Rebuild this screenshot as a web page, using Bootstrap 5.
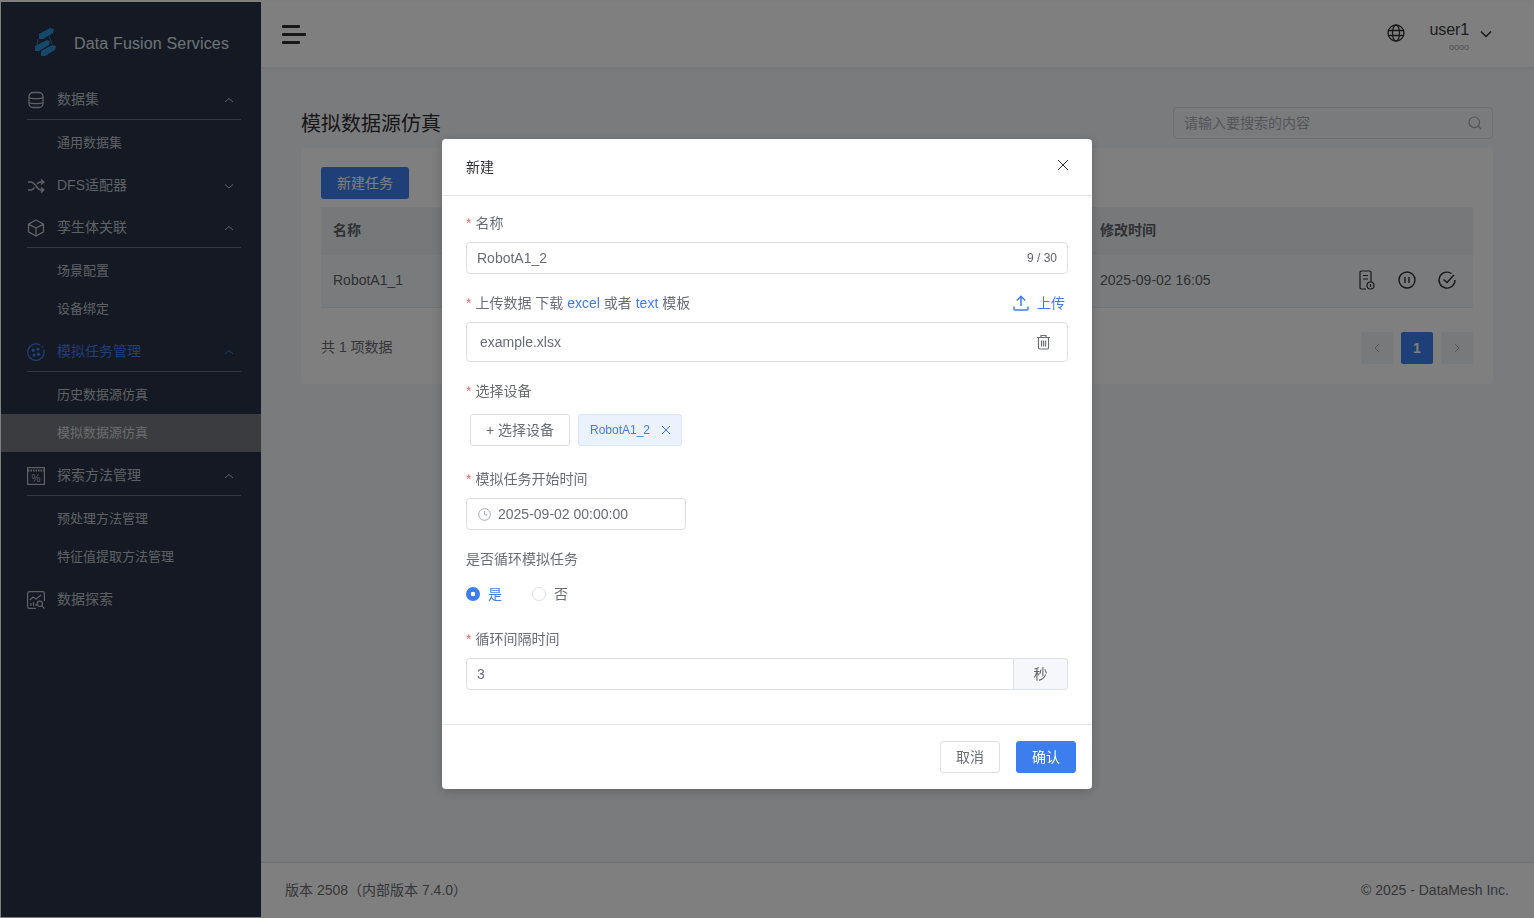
<!DOCTYPE html>
<html lang="zh-CN">

<head>
  <meta charset="UTF-8">
  <meta name="viewport" content="width=device-width, initial-scale=1">
  <title>Data Fusion Services</title>
  <link href="https://cdn.jsdelivr.net/npm/bootstrap@5.3.3/dist/css/bootstrap.min.css" rel="stylesheet">
  <style>
    html, body {
      height: 100%;
      overflow: hidden;
    }

    body {
      background: #fff;
      padding: 2px 0 1px 1px;
      font-family: "Liberation Sans", "Noto Sans CJK SC", sans-serif;
      font-size: 14px;
      color: #6a6d73;
    }

    .app-shell {
      height: 100%;
      background: #f5f6fb;
    }

    /* sidebar */
    .side-panel {
      width: 260px;
      flex: none;
      background: #283246;
      color: #bcc1cb;
    }

    .brand-row {
      height: 76px;
      padding-left: 33px;
      padding-top: 4px;
    }

    .brand-name {
      font-size: 16px;
      letter-spacing: .15px;
      color: #dfe2e7;
      margin-left: 18px;
      padding-top: 4px;
    }

    .group-head {
      height: 42px;
      margin: 0 20px 0 26px;
      padding-top: 2px;
      border-bottom: 1px solid transparent;
    }

    .group-head.is-open {
      border-bottom-color: #667088;
    }

    .group-head svg.menu-icon {
      width: 18px;
      height: 18px;
      flex: none;
      margin-right: 12px;
    }

    .group-head .arrow {
      margin-left: auto;
      margin-right: 7px;
      width: 10px;
      height: 10px;
    }

    .group-head.is-active {
      color: #3d7eee;
    }

    .sub-list {
      padding: 3px 0;
      font-size: 13px;
    }

    .sub-item {
      height: 38px;
      padding-left: 56px;
      line-height: 40px;
    }

    .sub-item.current {
      margin: 1px 0 -1px;
      line-height: 38px;
      background: #74787f;
      color: #d5d8dd;
    }

    /* main */
    .top-bar {
      height: 65px;
      flex: none;
      background: #fff;
      box-shadow: 0 1px 4px rgba(0, 21, 41, .08);
      padding: 0 42px 0 21px;
    }

    .burger {
      width: 24px;
    }

    .burger span {
      display: block;
      height: 3px;
      margin-bottom: 5px;
      background: #303133;
      border-radius: 1px;
    }

    .globe-icon {
      margin-top: -3px;
    }

    .user-block {
      margin: 4px 11px 0 24px;
    }

    .user-name {
      font-size: 16px;
      letter-spacing: -.1px;
      line-height: 18px;
      color: #3a3d42;
    }

    .user-sub {
      font-size: 9px;
      line-height: 10px;
      color: #a0a3a8;
      text-align: right;
      margin-top: 3px;
    }

    .chevron-icon {
      margin-top: -1px;
    }

    .page-area {
      padding: 40px 41px 0 40px;
      min-height: 0;
    }

    .page-title {
      font-size: 20px;
      font-weight: 400;
      color: #303133;
      margin: 0 0 -2px;
      line-height: 34px;
    }

    .search-box {
      width: 320px;
      height: 32px;
      border: 1px solid #dcdfe6;
      border-radius: 4px;
      padding: 0 10px;
      color: #a8abb2;
    }

    .main-card {
      margin-top: 9px;
      height: 236px;
      padding: 19px 20px 0;
      background: #fff;
      border-radius: 4px;
    }

    .btn-new,
    .btn-new:hover {
      background: #3d7eee;
      color: #fff;
      border: 0;
      width: 88px;
      height: 32px;
      padding: 0;
      font-size: 14px;
      border-radius: 3px;
    }

    .task-table {
      margin: 8px 0 0;
      table-layout: fixed;
      font-size: 14px;
    }

    .task-table th {
      height: 46px;
      background: #eff1f5;
      color: #606266;
      vertical-align: middle;
      padding: 2px 12px 0;
      border-bottom: 1px solid #e6e8ee;
    }

    .task-table td {
      height: 54px;
      background: #f5f6fb;
      color: #606266;
      vertical-align: middle;
      padding: 0 12px;
      border-bottom: 1px solid #e6e8ee;
    }

    .row-actions {
      gap: 20px;
      padding-left: 12px;
    }

    .pager-row {
      margin-top: 24px;
    }

    .pager-btn {
      width: 32px;
      height: 32px;
      background: #f0f2f5;
      border-radius: 2px;
      color: #a8abb2;
      font-weight: 700;
    }

    .pager-btn.on {
      padding-top: 2px;
      background: #3d7eee;
      color: #fff;
    }

    .foot-bar {
      height: 55px;
      flex: none;
      background: #fff;
      border-top: 1px solid #dcdfe6;
      padding: 0 25px 0 24px;
    }

    /* dialog */
    .task-modal {
      background: rgba(0, 0, 0, .5);
    }

    .task-modal .modal-dialog {
      max-width: 650px;
      margin: 139px auto 0;
    }

    .task-modal .modal-content {
      border: 0;
      border-radius: 4px;
      height: 650px;
      box-shadow: 0 2px 12px rgba(0, 0, 0, .2);
    }

    .task-modal .modal-header {
      height: 57px;
      padding: 0 24px;
      border-bottom: 1px solid #e4e7ed;
      border-radius: 0;
    }

    .dialog-title {
      font-size: 14px;
      color: #303133;
      margin-top: 1px;
    }

    .close-x {
      background: none;
      border: 0;
      padding: 0;
      margin-top: -4px;
      margin-right: -1px;
      line-height: 0;
    }

    .task-modal .modal-body {
      padding: 16px 24px 0;
      flex: none;
      height: 528px;
    }

    .field-label {
      line-height: 22px;
      color: #6a6d73;
      margin: 0 0 8px;
    }

    .field-label b {
      color: #f56c6c;
      font-weight: 400;
      margin-right: 4px;
    }

    .field-label a {
      color: #3d7eee;
      text-decoration: none;
    }

    .gap-row {
      margin-bottom: 18px;
    }

    .text-input {
      height: 32px;
      border: 1px solid #dcdfe6;
      border-radius: 4px;
      padding: 0 10px;
      font-size: 14px;
      color: #6a6d73;
      box-shadow: none;
    }

    .text-input input {
      border: 0;
      outline: 0;
      color: #6a6d73;
      padding: 0;
      min-width: 0;
      background: transparent;
    }

    .count-text {
      font-size: 12px;
      color: #606266;
    }

    .upload-link {
      color: #3d7eee;
      gap: 8px;
      margin-right: 3px;
    }

    .file-box {
      height: 40px;
      padding: 0 16px 0 13px;
    }

    .pick-row {
      padding-left: 4px;
      margin-top: 12px;
      margin-bottom: 22px;
      gap: 8px;
    }

    .pick-btn {
      width: 100px;
      height: 32px;
      padding: 0;
      font-size: 14px;
      color: #6a6d73;
      background: #fff;
      border: 1px solid #dcdfe6;
      border-radius: 3px;
    }

    .device-tag {
      width: 104px;
      height: 32px;
      padding: 0 10px 0 11px;
      font-size: 12px;
      color: #3d7eee;
      background: #ebf2fd;
      border: 1px solid #d8e5fb;
      border-radius: 3px;
    }

    .time-input {
      width: 220px;
      padding-left: 11px;
      gap: 7px;
    }

    .radio-row {
      height: 16px;
      margin: 16px 0 26px;
      gap: 30px;
    }

    .radio-dot {
      width: 14px;
      height: 14px;
      border: 1px solid #dcdfe6;
      border-radius: 50%;
      background: #fff;
      margin-right: 8px;
      flex: none;
    }

    .radio-dot.on {
      border: 0;
      background: radial-gradient(circle, #fff 0 2px, #3d7eee 2.6px);
    }

    .radio-on-text {
      color: #3d7eee;
    }

    .seconds-box {
      width: 54px;
      height: 32px;
      border: 1px solid #dcdfe6;
      border-left: 0;
      border-radius: 0 4px 4px 0;
      background: #f5f7fa;
      color: #606266;
    }

    .interval-input {
      border-radius: 4px 0 0 4px;
    }

    .task-modal .modal-footer {
      height: 65px;
      padding: 0 16px 0 0;
      border-top: 1px solid #e4e7ed;
      border-radius: 0;
      gap: 16px;
    }

    .task-modal .modal-footer > * {
      margin: 0;
    }

    .foot-btn {
      width: 60px;
      height: 32px;
      padding: 0;
      font-size: 14px;
      border-radius: 3px;
      color: #6a6d73;
      background: #fff;
      border: 1px solid #dcdfe6;
    }

    .foot-btn.primary {
      background: #3d7eee;
      border-color: #3d7eee;
      color: #fff;
    }
  </style>
</head>

<body>

  <div class="app-shell d-flex">
    <!-- menu -->
    <aside class="side-panel">
      <div class="brand-row d-flex align-items-center">
        <svg width="22" height="30" viewBox="0 0 22 30" fill="#2a90d4">
          <path d="M5 7 16 1 20 2 19 6 9 12 5 12Z" />
          <path d="M1 19 13 13 16 14 15 18 5 24 1 24Z" />
          <path d="M7 24 18 18 22 19 21 23 11 29 7 29Z" />
          <path d="M4 12 3 18 M15 9 18 17" stroke="#2a90d4" fill="none" stroke-width=".8" />
        </svg>
        <span class="brand-name">Data Fusion Services</span>
      </div>

      <div class="group-head is-open d-flex align-items-center">
        <svg class="menu-icon" viewBox="0 0 18 18" fill="none" stroke="currentColor" stroke-width="1.300">
          <rect x="2" y="1.500" width="14" height="15" rx="4" />
          <path d="M2 6.500c2 1.600 12 1.600 14 0M2 11.500c2 1.600 12 1.600 14 0" />
        </svg>
        <span>数据集</span>
        <svg class="arrow" viewBox="0 0 10 10" fill="none" stroke="currentColor"><path d="M1 7 5 3.500 9 7" /></svg>
      </div>
      <div class="sub-list">
        <div class="sub-item">通用数据集</div>
      </div>

      <div class="group-head d-flex align-items-center">
        <svg class="menu-icon" viewBox="0 0 18 18" fill="none" stroke="currentColor" stroke-width="1.500">
          <path d="M1 5h3c4 0 6 8 10 8h2.500M1 13h3c1.500 0 2.500-1 3.500-2.500M10 7c1-1.200 2.200-2 4-2h2.500M14 2.500 16.800 5 14 7.500M14 10.500 16.800 13 14 15.500" />
        </svg>
        <span>DFS适配器</span>
        <svg class="arrow" viewBox="0 0 10 10" fill="none" stroke="currentColor"><path d="M1 3.500 5 7 9 3.500" /></svg>
      </div>

      <div class="group-head is-open d-flex align-items-center">
        <svg class="menu-icon" viewBox="0 0 18 18" fill="none" stroke="currentColor" stroke-width="1.300">
          <path d="M9 1 16.500 5.100v7.800L9 17 1.500 12.900V5.100ZM1.500 5.100 9 9l7.500-3.900M9 9v8" />
        </svg>
        <span>孪生体关联</span>
        <svg class="arrow" viewBox="0 0 10 10" fill="none" stroke="currentColor"><path d="M1 7 5 3.500 9 7" /></svg>
      </div>
      <div class="sub-list">
        <div class="sub-item">场景配置</div>
        <div class="sub-item">设备绑定</div>
      </div>

      <div class="group-head is-open is-active d-flex align-items-center">
        <svg class="menu-icon" viewBox="0 0 18 18" fill="none" stroke="currentColor" stroke-width="1.300">
          <path d="M13.500 2.300A8.200 8.200 0 1 0 16.700 6.500" />
          <circle cx="6.300" cy="7.300" r="1.700" fill="currentColor" stroke="none" />
          <circle cx="11" cy="6.300" r="1.700" fill="currentColor" stroke="none" />
          <circle cx="7" cy="12" r="1.700" fill="currentColor" stroke="none" />
          <circle cx="11.500" cy="11.300" r="1.700" fill="currentColor" stroke="none" />
          <circle cx="15.500" cy="3.800" r=".9" fill="currentColor" stroke="none" />
        </svg>
        <span>模拟任务管理</span>
        <svg class="arrow" viewBox="0 0 10 10" fill="none" stroke="currentColor"><path d="M1 7 5 3.500 9 7" /></svg>
      </div>
      <div class="sub-list">
        <div class="sub-item">历史数据源仿真</div>
        <div class="sub-item current">模拟数据源仿真</div>
      </div>

      <div class="group-head is-open d-flex align-items-center">
        <svg class="menu-icon" viewBox="0 0 18 18" fill="none" stroke="currentColor" stroke-width="1.200">
          <rect x=".6" y=".6" width="16.800" height="16.800" />
          <path d="M1 3.600h16" stroke-width="2" stroke-dasharray="1.500 1" />
          <text x="9" y="14.500" text-anchor="middle" font-family="Liberation Sans" font-size="10" fill="currentColor" stroke="none">%</text>
        </svg>
        <span>探索方法管理</span>
        <svg class="arrow" viewBox="0 0 10 10" fill="none" stroke="currentColor"><path d="M1 7 5 3.500 9 7" /></svg>
      </div>
      <div class="sub-list">
        <div class="sub-item">预处理方法管理</div>
        <div class="sub-item">特征值提取方法管理</div>
      </div>

      <div class="group-head d-flex align-items-center">
        <svg class="menu-icon" viewBox="0 0 18 18" fill="none" stroke="currentColor" stroke-width="1.200">
          <path d="M9 17.400H2.200A1.600 1.600 0 0 1 .6 15.800V2.200A1.600 1.600 0 0 1 2.200 .6h13.600a1.600 1.600 0 0 1 1.600 1.600V10" />
          <path d="M3 9l3-3 3 2 5-4M4 15v-3M6.500 15v-4M9 15v-2" />
          <circle cx="12.800" cy="12.800" r="2.700" />
          <path d="M14.800 14.800l2.700 2.700" />
        </svg>
        <span>数据探索</span>
      </div>
    </aside>

    <div class="flex-grow-1 d-flex flex-column">
      <header class="top-bar d-flex align-items-center justify-content-between">
        <div class="burger">
          <span class="w-75"></span>
          <span></span>
          <span class="w-75 mb-0"></span>
        </div>
        <div class="d-flex align-items-center">
          <svg class="globe-icon" width="18" height="18" viewBox="0 0 18 18" fill="none" stroke="#303133" stroke-width="1.300">
            <circle cx="9" cy="9" r="8" />
            <ellipse cx="9" cy="9" rx="3.500" ry="8" />
            <path d="M1.500 6.500h15M1.500 11.500h15" />
          </svg>
          <div class="user-block">
            <div class="user-name">user1</div>
            <div class="user-sub">oooo</div>
          </div>
          <svg class="chevron-icon" width="12" height="8" viewBox="0 0 12 8" fill="none" stroke="#303133" stroke-width="1.500">
            <path d="M1 1.500 6 6.500 11 1.500" />
          </svg>
        </div>
      </header>

      <main class="page-area flex-grow-1">
        <div class="d-flex justify-content-between align-items-start">
          <h1 class="page-title">模拟数据源仿真</h1>
          <div class="search-box d-flex align-items-center justify-content-between">
            <span>请输入要搜索的内容</span>
            <svg width="14" height="14" viewBox="0 0 14 14" fill="none" stroke="#a8abb2" stroke-width="1.200">
              <circle cx="6.300" cy="6.300" r="5.300" />
              <path d="M10.200 10.200 13 13" />
            </svg>
          </div>
        </div>

        <div class="main-card">
          <button class="btn btn-new" type="button">新建任务</button>
          <table class="table task-table">
            <colgroup>
              <col style="width: 767px">
              <col style="width: 245px">
              <col>
            </colgroup>
            <thead>
              <tr>
                <th>名称</th>
                <th>修改时间</th>
                <th></th>
              </tr>
            </thead>
            <tbody>
              <tr>
                <td>RobotA1_1</td>
                <td>2025-09-02 16:05</td>
                <td>
                  <div class="row-actions d-flex align-items-center">
                    <svg width="20" height="20" viewBox="0 0 20 20" fill="none" stroke="#303133" stroke-width="1.200">
                      <path d="M9 19H4.500A1.500 1.500 0 0 1 3 17.500v-15A1.500 1.500 0 0 1 4.500 1h8A1.500 1.500 0 0 1 14 2.500V12M6 5.500h5M6 9h5" />
                      <circle cx="13.500" cy="15.500" r="3.500" />
                      <path d="M13.500 14v3" />
                    </svg>
                    <svg width="20" height="20" viewBox="0 0 20 20" fill="none" stroke="#303133" stroke-width="1.400">
                      <circle cx="10" cy="10" r="8" />
                      <path d="M8 7v6M12 7v6" />
                    </svg>
                    <svg width="20" height="20" viewBox="0 0 20 20" fill="none" stroke="#303133" stroke-width="1.400">
                      <path d="M14.500 3.500A8 8 0 1 0 18 10" />
                      <path d="M6.500 9.500 10 12.500 17 5" />
                    </svg>
                  </div>
                </td>
              </tr>
            </tbody>
          </table>
          <div class="pager-row d-flex align-items-center justify-content-between">
            <span>共 1 项数据</span>
            <div class="d-flex gap-2">
              <div class="pager-btn d-flex align-items-center justify-content-center">
                <svg width="8" height="10" viewBox="0 0 8 10" fill="none" stroke="#a8abb2"><path d="M6 1 2 5 6 9" /></svg>
              </div>
              <div class="pager-btn on d-flex align-items-center justify-content-center">1</div>
              <div class="pager-btn d-flex align-items-center justify-content-center">
                <svg width="8" height="10" viewBox="0 0 8 10" fill="none" stroke="#a8abb2"><path d="M2 1 6 5 2 9" /></svg>
              </div>
            </div>
          </div>
        </div>
      </main>

      <footer class="foot-bar d-flex align-items-center justify-content-between">
        <span>版本 2508（内部版本 7.4.0）</span>
        <span>© 2025 - DataMesh Inc.</span>
      </footer>
    </div>
  </div>

  <!-- 新建 dialog -->
  <div class="modal d-block task-modal">
    <div class="modal-dialog">
      <div class="modal-content">
        <div class="modal-header">
          <span class="dialog-title">新建</span>
          <button class="close-x ms-auto" type="button" aria-label="关闭">
            <svg width="12" height="12" viewBox="0 0 12 12" fill="none" stroke="#303133"><path d="M1 1 11 11M11 1 1 11" /></svg>
          </button>
        </div>

        <div class="modal-body">
          <p class="field-label"><b>*</b>名称</p>
          <div class="text-input gap-row d-flex align-items-center justify-content-between">
            <input class="flex-grow-1" value="RobotA1_2">
            <span class="count-text">9 / 30</span>
          </div>

          <div class="field-label d-flex justify-content-between align-items-center">
            <span><b>*</b>上传数据 下载 <a href="#">excel</a> 或者 <a href="#">text</a> 模板</span>
            <span class="upload-link d-flex align-items-center">
              <svg width="16" height="16" viewBox="0 0 16 16" fill="none" stroke="#3d7eee" stroke-width="1.500">
                <path d="M8 11V1.500M3.800 5.500 8 1.300l4.200 4.200M1 11.500v2.200c0 .7.500 1.300 1.200 1.300h11.600c.7 0 1.200-.6 1.200-1.300v-2.200" />
              </svg>
              上传
            </span>
          </div>
          <div class="text-input file-box gap-row d-flex align-items-center justify-content-between">
            <span>example.xlsx</span>
            <svg width="15" height="16" viewBox="0 0 15 16" fill="none" stroke="#6a6d73" stroke-width="1.200">
              <path d="M1 3.500h13M5 3.500V1.500h5v2M2.500 3.500v10.300c0 .7.500 1.200 1.200 1.200h7.600c.7 0 1.200-.5 1.200-1.200V3.500M5.500 6.500v6M7.500 6.500v6M9.500 6.500v6" />
            </svg>
          </div>

          <p class="field-label mb-0"><b>*</b>选择设备</p>
          <div class="pick-row d-flex">
            <button class="pick-btn" type="button">+ 选择设备</button>
            <div class="device-tag d-flex align-items-center justify-content-between">
              <span>RobotA1_2</span>
              <svg width="10" height="10" viewBox="0 0 10 10" fill="none" stroke="#3d7eee"><path d="M1 1 9 9M9 1 1 9" /></svg>
            </div>
          </div>

          <p class="field-label"><b>*</b>模拟任务开始时间</p>
          <div class="text-input time-input gap-row d-flex align-items-center">
            <svg width="13" height="13" viewBox="0 0 13 13" fill="none" stroke="#a8abb2">
              <circle cx="6.500" cy="6.500" r="5.800" />
              <path d="M6.500 3v3.800h3" />
            </svg>
            <span>2025-09-02 00:00:00</span>
          </div>

          <p class="field-label mb-0">是否循环模拟任务</p>
          <div class="radio-row d-flex align-items-center">
            <span class="d-flex align-items-center">
              <span class="radio-dot on"></span><span class="radio-on-text">是</span>
            </span>
            <span class="d-flex align-items-center">
              <span class="radio-dot"></span><span>否</span>
            </span>
          </div>

          <p class="field-label"><b>*</b>循环间隔时间</p>
          <div class="d-flex">
            <div class="text-input interval-input flex-grow-1 d-flex align-items-center">3</div>
            <div class="seconds-box d-flex align-items-center justify-content-center">秒</div>
          </div>
        </div>

        <div class="modal-footer">
          <button class="foot-btn" type="button">取消</button>
          <button class="foot-btn primary" type="button">确认</button>
        </div>
      </div>
    </div>
  </div>

  <script src="https://cdn.jsdelivr.net/npm/bootstrap@5.3.3/dist/js/bootstrap.bundle.min.js"></script>
</body>

</html>
